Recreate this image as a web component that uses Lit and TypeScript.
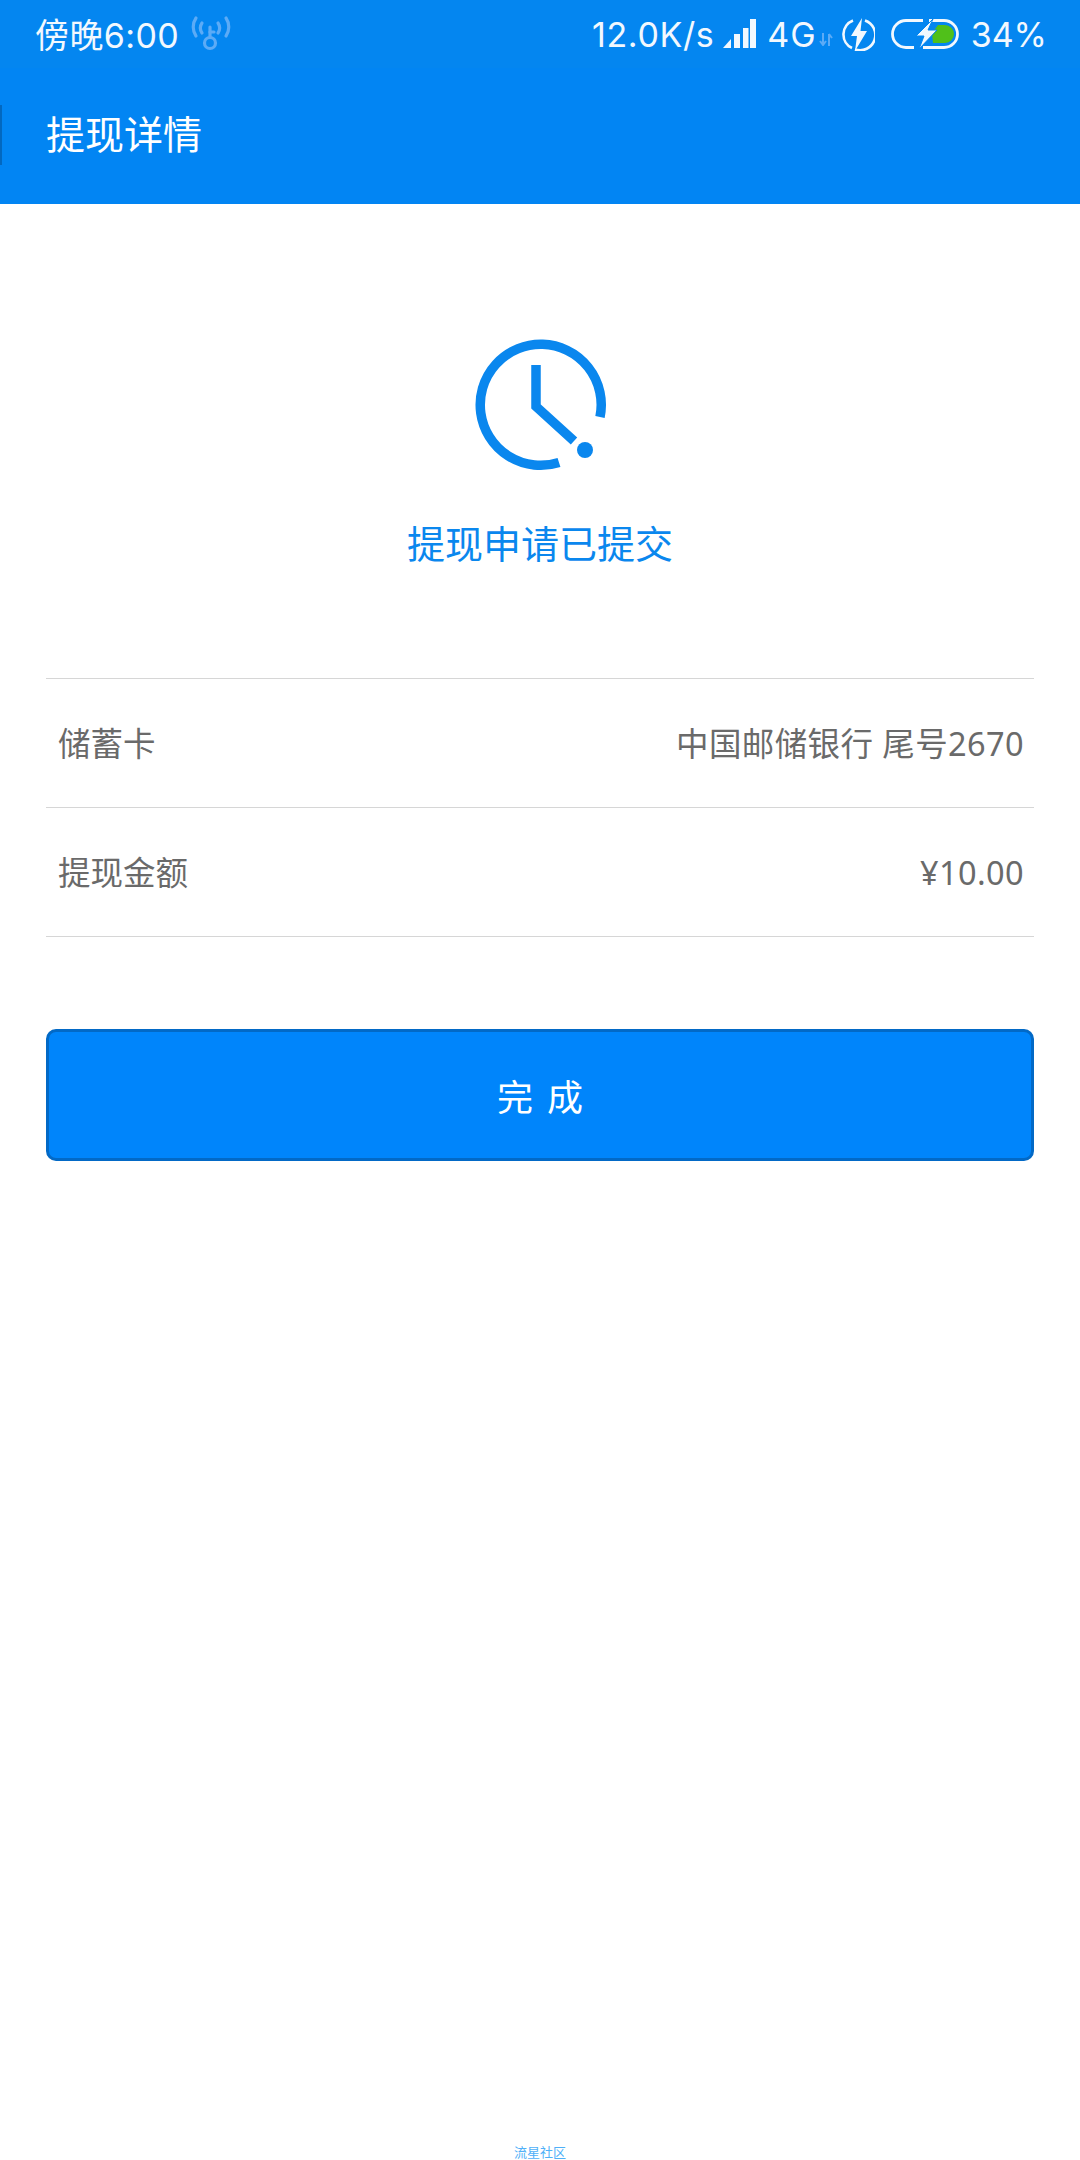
import { LitElement, html, css } from 'lit';
import { customElement } from 'lit/decorators.js';

@customElement('status-bar')
export class StatusBar extends LitElement {
  static styles = css`
    :host {
      display: flex;
      align-items: center;
      height: 68px;
      padding: 0 33px 0 35px;
      background: #0486f0;
      color: #f2f8fe;
      font-size: 34px;
      font-family: Inter, 'Noto Sans CJK SC', sans-serif;
    }
    .time {
      margin-top: -2px;
      letter-spacing: 0.4px;
      white-space: nowrap;
    }
    .hotspot {
      margin: -2px 0 0 11px;
    }
    .spacer {
      flex: 1;
    }
    .speed {
      margin-right: 9px;
      letter-spacing: 0.6px;
    }
    .signal {
      margin: -2px 11px 0 0;
    }
    .network {
      letter-spacing: 1px;
    }
    .updown {
      margin: 10px 9px 0 2px;
    }
    .saver {
      margin-right: 16px;
    }
    .battery {
      margin-right: 12px;
    }
    svg {
      display: block;
      flex: none;
    }
  `;

  render() {
    return html`
      <span class="time">傍晚6:00</span>
      <svg class="hotspot" width="42" height="36" viewBox="0 0 42 36" fill="none" stroke="#5cabf6" stroke-width="3.200" stroke-linecap="round">
        <circle cx="20" cy="28" r="5.500"></circle>
        <path d="M20 22V12"></path>
        <path d="M20 17h4"></path>
        <path d="M12 18a9 9 0 0 1 0-10"></path>
        <path d="M28 18a9 9 0 0 0 0-10"></path>
        <path d="M6 21a16 16 0 0 1 0-18"></path>
        <path d="M36 21a16 16 0 0 0 0-18"></path>
      </svg>
      <span class="spacer"></span>
      <span class="speed">12.0K/s</span>
      <svg class="signal" width="33" height="29" viewBox="0 0 33 29" fill="#f2f8fe">
        <path d="M0 29 8 20V29Z"></path>
        <rect x="11" y="15" width="6" height="14"></rect>
        <rect x="20" y="9" width="5.500" height="20"></rect>
        <rect x="27" y="0" width="6" height="29"></rect>
      </svg>
      <span class="network">4G</span>
      <svg class="updown" width="14" height="13" viewBox="0 0 14 13" fill="none" stroke="#5cabf6" stroke-width="2">
        <path d="M4 0V12M1 8l3 4 3-4"></path>
        <path d="M10 13V1M10 1l3 4"></path>
      </svg>
      <svg class="saver" width="33" height="33" viewBox="0 0 33 33">
        <path d="M11 2.500A15 15 0 0 0 10 30M23 2.500A15 15 0 0 1 13 31.500" fill="none" stroke="#f2f8fe" stroke-width="2.600"></path>
        <path d="M20 0 9 18h6l-2 15 12-20h-6.500Z" fill="#f2f8fe"></path>
      </svg>
      <svg class="battery" width="68" height="30" viewBox="0 0 68 30">
        <path d="M32 1.500H15A13.500 13.500 0 0 0 15 28.500H23M38 1.500H53A13.500 13.500 0 0 1 53 28.500H32" fill="none" stroke="#f2f8fe" stroke-width="2.800"></path>
        <path d="M47 6H54A9 9 0 0 1 54 24H42L41 14Z" fill="#50c01a"></path>
        <path d="M42 0 25 17H33L28 30 46 11H37Z" fill="#f2f8fe" stroke="#0486f0" stroke-width="1"></path>
      </svg>
      <span>34%</span>
    `;
  }
}

@customElement('app-root')
export class AppRoot extends LitElement {
  static styles = css`
    :host {
      display: flex;
      flex-direction: column;
      min-height: 2160px;
      background: #fff;
      font-family: 'Noto Sans', 'Noto Sans CJK SC', sans-serif;
    }
    .header {
      height: 204px;
      background: #0285f3;
    }
    .toolbar {
      display: flex;
      align-items: center;
      height: 60px;
      margin-top: 37px;
      color: #fff;
      font-size: 39px;
      line-height: 56px;
    }
    .marker {
      width: 2px;
      height: 60px;
      margin-right: 44px;
      background: #0268c0;
    }
    .toolbar-title {
      margin-top: -3px;
    }
    .result {
      display: flex;
      flex-direction: column;
      align-items: center;
      padding-top: 135px;
      color: #0a87ee;
    }
    .clock {
      display: block;
    }
    .result-text {
      margin-top: 46px;
      font-size: 38px;
      line-height: 52px;
    }
    .rows {
      margin: 109px 46px 0;
      border-top: 1px solid #d6d6d6;
    }
    .row {
      display: flex;
      align-items: center;
      justify-content: space-between;
      box-sizing: content-box;
      height: 126px;
      padding: 2px 10px 0 12px;
      border-bottom: 1px solid #d6d6d6;
      color: #6a6a6a;
      font-size: 32.500px;
      line-height: 44px;
    }
    .value {
      letter-spacing: 0.4px;
    }
    .done {
      display: block;
      box-sizing: border-box;
      width: 988px;
      height: 132px;
      margin: 92px 46px 0;
      padding: 0 0 0 14px;
      border: 3px solid #0269c6;
      border-radius: 10px;
      background: #0085fb;
      color: #fff;
      font: inherit;
      font-size: 36px;
      letter-spacing: 14px;
    }
    .footer {
      margin-top: auto;
      height: 16px;
      color: #4fb0f8;
      font-size: 13px;
      line-height: 16px;
      text-align: center;
      overflow: hidden;
    }
  `;

  render() {
    return html`
      <div class="header">
        <status-bar></status-bar>
        <div class="toolbar">
          <span class="marker"></span>
          <span class="toolbar-title">提现详情</span>
        </div>
      </div>
      <div class="result">
        <svg class="clock" width="132" height="132" viewBox="0 0 132 132" fill="none" stroke="#0a87ee" stroke-width="9.500">
          <path d="M126 78A60.500 60.500 0 1 0 85 123.500"></path>
          <path d="M62 26V67.500L100 102"></path>
          <circle cx="111" cy="111" r="8" fill="#0a87ee" stroke="none"></circle>
        </svg>
        <div class="result-text">提现申请已提交</div>
      </div>
      <div class="rows">
        <div class="row"><span>储蓄卡</span><span class="value">中国邮储银行 尾号2670</span></div>
        <div class="row"><span>提现金额</span><span class="value">¥10.00</span></div>
      </div>
      <button class="done">完成</button>
      <div class="footer">流星社区</div>
    `;
  }
}
